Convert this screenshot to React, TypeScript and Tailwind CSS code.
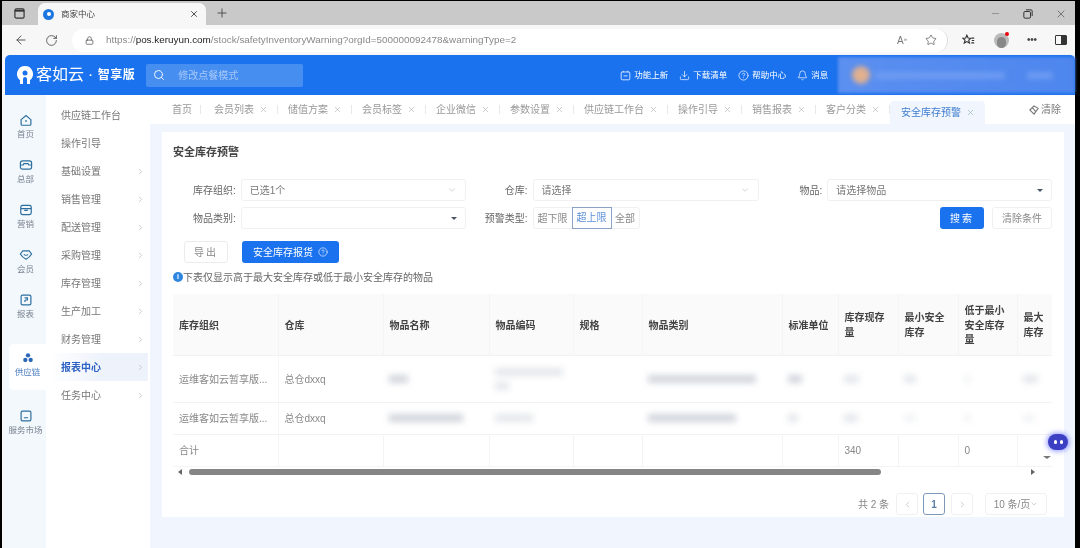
import {ArrowLeft, Bell, ChevronDown, ChevronLeft, ChevronRight, CircleHelp, Download, Lock, Minus, Plus, RotateCw, Search, Star, X} from "lucide-react";
import type {ReactNode} from "react";

const font = {fontFamily: '"Liberation Sans", "Noto Sans CJK SC", sans-serif'}

const railTop = [
    {label: "首页", d: "M3 9.5 10 3.5l7 6V16a1.5 1.5 0 0 1-1.5 1.5h-11A1.5 1.5 0 0 1 3 16ZM10 10v3"},
    {label: "总部", d: "M5 4h10a3 3 0 0 1 3 3v6a3 3 0 0 1-3 3H5a3 3 0 0 1-3-3V7a3 3 0 0 1 3-3ZM2 10h4l1-2h6l1 2h4"},
    {label: "营销", d: "M5 3.5h10A2.5 2.5 0 0 1 17.5 6v8a2.5 2.5 0 0 1-2.5 2.5H5A2.5 2.5 0 0 1 2.5 14V6A2.5 2.5 0 0 1 5 3.5ZM2.5 8h15M7.5 10.5h5"},
    {label: "会员", d: "M5.5 4h9L18 8.5c-2 3.5-5 6-8 7.5-3-1.5-6-4-8-7.5ZM7 9c1.5 1.5 4.5 1.5 6 0"},
    {label: "报表", d: "M5 3h10a2 2 0 0 1 2 2v10a2 2 0 0 1-2 2H5a2 2 0 0 1-2-2V5a2 2 0 0 1 2-2ZM8 7h4v3H8.5M8.5 10v3"},
]

const menus = [
    {label: "供应链工作台"},
    {label: "操作引导"},
    {label: "基础设置", more: true},
    {label: "销售管理", more: true},
    {label: "配送管理", more: true},
    {label: "采购管理", more: true},
    {label: "库存管理", more: true},
    {label: "生产加工", more: true},
    {label: "财务管理", more: true},
    {label: "报表中心", more: true, active: true},
    {label: "任务中心", more: true},
]

const tabs = ["会员列表", "储值方案", "会员标签", "企业微信", "参数设置", "供应链工作台", "操作引导", "销售报表", "客户分类"]

const columns = [105, 105, 106, 84, 69, 140, 56, 60, 60, 59, 35]
const heads = ["库存组织", "仓库", "物品名称", "物品编码", "规格", "物品类别", "标准单位", "库存现存量", "最小安全库存", "低于最小安全库存量", "最大库存"]

// masked values in the source, only a smudge is left
const Smudge = ({w, tone = "bg-gray-300"}: { w: number, tone?: string }) => (
    <div className={`h-[8px] blur-[3px] ${tone}`} style={{width: w}}/>
)

const rows = [
    [<Smudge key="a" w={19}/>, <div key="b" className="flex flex-col gap-[6px]"><Smudge w={68} tone="bg-gray-200"/><Smudge w={14} tone="bg-gray-200"/></div>, null, <Smudge key="c" w={108}/>, <Smudge key="d" w={14}/>, <Smudge key="e" w={15} tone="bg-gray-200"/>, <Smudge key="f" w={12} tone="bg-gray-200"/>, <Smudge key="g" w={7} tone="bg-gray-100"/>, <Smudge key="h" w={15} tone="bg-gray-200"/>],
    [<Smudge key="a" w={74}/>, <Smudge key="b" w={38} tone="bg-gray-200"/>, null, <Smudge key="c" w={88}/>, <Smudge key="d" w={10} tone="bg-gray-200"/>, <Smudge key="e" w={14} tone="bg-gray-200"/>, <Smudge key="f" w={12} tone="bg-gray-100"/>, <Smudge key="g" w={7} tone="bg-gray-100"/>, <Smudge key="h" w={12} tone="bg-gray-100"/>],
]

const Caret = ({className = ""}: { className?: string }) => (
    <span className={`w-0 h-0 border-x-[3px] border-x-transparent border-t-[3px] border-t-gray-600 ${className}`}/>
)

const Field = ({label, width, children}: { label: string, width: string, children: ReactNode }) => (
    <div className="flex items-center">
        <span className="text-[10px] text-[#666] whitespace-nowrap mr-[5px]">{label}:</span>
        <div className={`h-[22px] rounded-[3px] border border-[#f0f0f0] flex items-center justify-between pl-[8px] pr-[8px] text-[10px] text-[#777] ${width}`}>
            {children}
        </div>
    </div>
)

const Icon = ({d, className}: { d: string, className: string }) => (
    <svg viewBox="0 0 20 20" fill="none" stroke="currentColor" strokeWidth="1.7" className={className}>
        <path d={d}/>
    </svg>
)

function Chrome() {
    return (
        <>
            <div className="h-[24px] bg-[#c9c9c9] flex items-end pl-[12px] pr-[7px] shrink-0">
                <svg viewBox="0 0 12 12" className="w-[11px] h-[11px] mb-[6px] text-[#333]" fill="none" stroke="currentColor" strokeWidth="1.3">
                    <rect x="1" y="1" width="10" height="10" rx="1.5"/>
                    <path d="M1 3h10" strokeWidth="2"/>
                </svg>
                <div className="ml-[13px] w-[168px] h-[22px] bg-[#f7f7f7] rounded-t-[7px] flex items-center pl-[5px] pr-[7px]">
                    <span className="w-[11px] h-[11px] rounded-full bg-[#1c77e0] flex items-center justify-center">
                        <span className="w-[4px] h-[4px] rounded-full bg-white"/>
                    </span>
                    <span className="ml-[7px] text-[8.5px] text-[#444]">商家中心</span>
                    <X className="ml-auto w-[10px] h-[10px] text-[#333]" strokeWidth={2}/>
                </div>
                <Plus className="ml-[9px] mb-[5px] w-[14px] h-[14px] text-[#444]" strokeWidth={1.5}/>
                <Minus className="ml-auto mb-[6px] w-[11px] h-[11px] text-[#666]" strokeWidth={1.2}/>
                <svg viewBox="0 0 12 12" className="ml-[22px] mb-[6px] w-[10px] h-[10px] text-[#333]" fill="none" stroke="currentColor" strokeWidth="1.2">
                    <rect x="1" y="3" width="8" height="8" rx="1.5"/>
                    <path d="M3.5 1h6a1.5 1.5 0 0 1 1.5 1.5v6"/>
                </svg>
                <X className="ml-[22px] mr-[1px] mb-[5px] w-[12px] h-[12px] text-[#444]" strokeWidth={1.3}/>
            </div>
            <div className="h-[30px] bg-[#f7f7f7] flex items-center pl-[12px] pr-[7px] shrink-0">
                <ArrowLeft className="w-[14px] h-[14px] text-[#444]" strokeWidth={1.5}/>
                <RotateCw className="ml-[17px] w-[13px] h-[13px] text-[#444]" strokeWidth={1.5}/>
                <div className="ml-[14px] w-[876px] h-[23px] bg-white rounded-full border-r border-[#ddd] flex items-center pl-[13px] pr-[10px]">
                    <Lock className="w-[9px] h-[9px] text-[#555]" strokeWidth={2}/>
                    <span className="ml-[12px] text-[9.9px] text-[#888] whitespace-nowrap">
                        https://<span className="text-[#222]">pos.keruyun.com</span>/stock/safetyInventoryWarning?orgId=500000092478&amp;warningType=2
                    </span>
                    <span className="ml-auto text-[10px] text-[#777]">A<sup className="text-[6px]">»</sup></span>
                    <Star className="ml-[18px] w-[12px] h-[12px] text-[#444]" strokeWidth={1.3}/>
                </div>
                <svg viewBox="0 0 16 16" className="ml-[14px] w-[13px] h-[13px] text-[#333]" fill="none" stroke="currentColor" strokeWidth="1.4">
                    <path d="M6 1.5 7.5 5l3.5.3-2.7 2.3.9 3.6L6 9.3l-3.2 1.9.9-3.6L1 5.3 4.5 5ZM12 5h3M12 8h3M11.5 11H15"/>
                </svg>
                <span className="relative ml-[19px] w-[15px] h-[15px] rounded-full bg-[#bbb] flex items-end justify-center overflow-visible">
                    <span className="w-[9px] h-[11px] rounded-full bg-[#888]"/>
                    <span className="absolute right-0 top-[-1px] w-[4px] h-[4px] rounded-full bg-red-600"/>
                </span>
                <span className="ml-[18px] text-[10px] leading-none text-[#444] tracking-tight">•••</span>
                <span className="ml-[18px] w-[12px] h-[10px] border border-[#333] rounded-[1px] flex justify-end">
                    <span className="w-[5px] bg-[#333]"/>
                </span>
            </div>
        </>
    )
}

function Header() {
    const links = [
        {label: "功能上新", icon: <svg viewBox="0 0 14 14" fill="none" stroke="currentColor" strokeWidth="1" className="w-[11px] h-[11px]"><rect x="1.5" y="2.5" width="11" height="10" rx="1.5"/><path d="M4 1v2M10 1v2M4.5 7.5h5"/></svg>},
        {label: "下载清单", icon: <Download className="w-[11px] h-[11px]" strokeWidth={1.5}/>},
        {label: "帮助中心", icon: <CircleHelp className="w-[11px] h-[11px]" strokeWidth={1.5}/>},
        {label: "消息", icon: <Bell className="w-[11px] h-[11px]" strokeWidth={1.5}/>},
    ]
    return (
        <div className="h-[40px] bg-[#1a72ee] rounded-t-[5px] flex items-center pl-[12px] shrink-0 text-white">
            <svg viewBox="0 0 16 18" className="w-[16px] h-[18px]" fill="white">
                <path d="M8 0a8 8 0 0 1 5 14.2V18h-3v-5a2 2 0 0 0-4 0v5H3v-3.8A8 8 0 0 1 8 0Z"/>
                <circle cx="8" cy="7" r="2.5" fill="#1a72ee"/>
            </svg>
            <span className="ml-[3px] text-[16px] whitespace-nowrap">客如云</span>
            <span className="mx-[5px] text-[11px] font-bold">·</span>
            <span className="text-[12px] tracking-[0.5px] font-bold whitespace-nowrap">智享版</span>
            <div className="ml-[11px] w-[157px] h-[23px] rounded-[2px] bg-white/20 flex items-center pl-[7px]">
                <Search className="w-[12px] h-[12px]" strokeWidth={1.8}/>
                <span className="ml-[13px] text-[10px] text-white/50 blur-[0.4px]">修改点餐模式</span>
            </div>
            <div className="ml-[317px] flex items-center gap-[11px] w-[210px]">
                {links.map(link =>
                    <div key={link.label} className="flex items-center gap-[3px] whitespace-nowrap text-[8.5px]">
                        {link.icon}
                        <span>{link.label}</span>
                    </div>)}
            </div>
            <div className="ml-auto w-[237px] h-[36px] bg-linear-to-r from-[#5b8ff0] to-[#4d86ee] flex items-center pl-[14px] blur-[1.5px]">
                <span className="w-[18px] h-[18px] rounded-full bg-[#e0b08f] blur-[2px]"/>
                <span className="ml-[5px] w-[130px] h-[7px] bg-[#6d9bf2] blur-[2px]"/>
                <span className="ml-[22px] w-[26px] h-[7px] bg-[#6d9bf2] blur-[2px]"/>
            </div>
        </div>
    )
}

function Sidebar() {
    return (
        <>
            <div className="w-[41px] bg-[#f3f8fd] pt-[4px] shrink-0 flex flex-col">
                {railTop.map(item =>
                    <div key={item.label} className="h-[45px] flex flex-col items-center pt-[14px] text-[#7a8290]">
                        <Icon d={item.d} className="w-[14px] h-[14px] text-[#2c6f9f]"/>
                        <span className="text-[8.5px] mt-[1px]">{item.label}</span>
                    </div>)}
                <div className="mt-[20px] ml-[4px] h-[46px] bg-white rounded-l-[5px] flex flex-col items-center pt-[9px]">
                    <svg viewBox="0 0 12 12" className="w-[10px] h-[10px] text-[#2a67b8]" fill="currentColor">
                        <circle cx="6" cy="2.8" r="2.6"/><circle cx="2.8" cy="8.4" r="2.6"/><circle cx="9.2" cy="8.4" r="2.6"/>
                    </svg>
                    <span className="text-[8.5px] mt-[3px] text-[#4d7ec0] whitespace-nowrap">供应链</span>
                </div>
                <div className="mt-[6px] flex flex-col items-center pt-[13px] text-[#7a8290]">
                    <Icon d="M5 3h10a2 2 0 0 1 2 2v10a2 2 0 0 1-2 2H5a2 2 0 0 1-2-2V5a2 2 0 0 1 2-2ZM7 12.5h6" className="w-[14px] h-[14px] text-[#2c6f9f]"/>
                    <span className="text-[8.5px] mt-[1px] whitespace-nowrap">服务市场</span>
                </div>
            </div>
            <div className="w-[104px] bg-white pt-[6px] shrink-0">
                {menus.map(menu =>
                    <div key={menu.label}
                         className={`h-[28px] ml-[4px] mr-[2px] pl-[11px] pr-[3px] flex items-center justify-between text-[10px] ${menu.active ? "bg-linear-to-r from-white via-[#eef3fb] to-[#eef3fb] text-[#2d62c4] font-bold" : "text-[#777]"}`}>
                        <span className="whitespace-nowrap">{menu.label}</span>
                        {menu.more && <ChevronRight className="w-[9px] h-[9px] text-[#bbb]"/>}
                    </div>)}
            </div>
        </>
    )
}

function TabBar() {
    return (
        <div className="h-[29px] bg-white flex items-center pl-[22px] shrink-0 text-[10px] text-[#999]">
            <span className="whitespace-nowrap">首页</span>
            <span className="ml-[8px] mr-[13px] h-[9px] w-px bg-[#e8e8e8]"/>
            {tabs.map(tab =>
                <div key={tab} className="flex items-center whitespace-nowrap">
                    <span>{tab}</span>
                    <X className="ml-[5px] w-[9px] h-[9px] text-[#aaa]" strokeWidth={1.5}/>
                    <span className="ml-[9px] mr-[10px] h-[9px] w-px bg-[#e8e8e8]"/>
                </div>)}
            <div className="-ml-[10px] h-[23px] mt-[6px] w-[95px] pl-[11px] bg-[#f1f5fd] rounded-t-[4px] flex items-center text-[#3f7fd0] whitespace-nowrap">
                <span>安全库存预警</span>
                <X className="ml-[5px] w-[9px] h-[9px] text-[#8aa]" strokeWidth={1.5}/>
            </div>
            <div className="ml-auto mr-[14px] flex items-center gap-[2px] text-[#777]">
                <svg viewBox="0 0 12 12" className="w-[10px] h-[10px]" fill="none" stroke="currentColor" strokeWidth="1.3"><path d="M1 6l5-5 5 3-5 7ZM4 3l4 5"/></svg>
                <span>清除</span>
            </div>
        </div>
    )
}

function Filters() {
    return (
        <div className="flex flex-col">
            <div className="flex items-center h-[22px]">
                <div className="ml-[20px]"><Field label="库存组织" width="w-[225px]">已选1个<ChevronDown className="w-[10px] h-[10px] text-[#ccc]"/></Field></div>
                <div className="ml-[39px]"><Field label="仓库" width="w-[226px]">请选择<ChevronDown className="w-[10px] h-[10px] text-[#ccc]"/></Field></div>
                <div className="ml-[41px]"><Field label="物品" width="w-[225px]">请选择物品<Caret/></Field></div>
            </div>
            <div className="flex items-center h-[22px] mt-[6px]">
                <div className="ml-[20px]"><Field label="物品类别" width="w-[225px]"><span/><Caret/></Field></div>
                <div className="ml-[19px] flex items-center">
                    <span className="text-[10px] text-[#666] mr-[5px] whitespace-nowrap">预警类型:</span>
                    <div className="w-[107px] h-[22px] rounded-[3px] border border-[#f0f0f0] flex items-center text-[10px] text-[#888]">
                        <span className="w-[38px] text-center">超下限</span>
                        <span className="w-[40px] h-[22px] leading-[20px] text-center border border-[#8aa3c4] text-[#5a8fd8]">超上限</span>
                        <span className="w-[27px] text-center">全部</span>
                    </div>
                </div>
                <button className="ml-auto w-[44px] h-[22px] rounded-[3px] bg-[#1a72ee] text-white text-[10px] tracking-[2px]">搜索</button>
                <button className="ml-[8px] mr-[12px] w-[60px] h-[22px] rounded-[3px] border border-[#f0f0f0] text-[#888] text-[10px]">清除条件</button>
            </div>
            <div className="flex items-center h-[22px] mt-[12px] pl-[11px]">
                <button className="w-[44px] h-[22px] rounded-[3px] border border-[#ececec] text-[#888] text-[10px] tracking-[2px]">导出</button>
                <button className="ml-[14px] w-[97px] h-[22px] rounded-[3px] bg-[#1a72ee] text-white text-[10px] flex items-center justify-center gap-[5px]">
                    安全库存报货
                    <CircleHelp className="w-[10px] h-[10px]" strokeWidth={1.5}/>
                </button>
            </div>
            <div className="flex items-center mt-[7px] h-[14px] text-[10px] text-[#666]">
                <span className="w-[10px] h-[10px] rounded-full bg-[#2f86e0] text-white text-[7px] font-bold leading-[10px] text-center shrink-0">i</span>
                <span className="whitespace-nowrap">下表仅显示高于最大安全库存或低于最小安全库存的物品</span>
            </div>
        </div>
    )
}

function StockTable() {
    return (
        <div className="mt-[10px] mr-[12px] relative">
            <table className="table-fixed border-collapse w-[879px] text-[10px]">
                <colgroup>
                    {columns.map((w, i) => <col key={i} style={{width: w}}/>)}
                </colgroup>
                <thead>
                    <tr className="h-[61px] bg-[#fafafa] text-[#444] font-bold">
                        {heads.map((h, i) =>
                            <th key={h} className={`px-[6px] pt-[3px] pb-0 text-left align-middle font-bold leading-[14.5px] border-r border-[#f4f4f4] ${i === 10 ? "border-r-0" : ""}`}>
                                <div className={i === 9 ? "h-[43px] overflow-hidden" : ""}>{h}</div>
                            </th>)}
                    </tr>
                </thead>
                <tbody className="text-[#888]">
                    {rows.map((cells, r) =>
                        <tr key={r} className={`${r === 0 ? "h-[47px]" : "h-[32px]"} border-t border-[#f2f2f2]`}>
                            <td className={`px-[6px] border-r border-[#f6f6f6] whitespace-nowrap ${r === 0 ? "pt-[2px]" : ""}`}>运维客如云暂享版...</td>
                            <td className={`px-[6px] whitespace-nowrap ${r === 0 ? "pt-[2px]" : ""}`}>总仓dxxq</td>
                            {cells.map((cell, i) => <td key={i} className="px-[6px]">{cell}</td>)}
                        </tr>)}
                    <tr className="h-[32px] border-t border-[#f2f2f2]">
                        <td className="px-[6px] border-r border-[#f4f4f4]">合计</td>
                        {columns.slice(1).map((_, i) =>
                            <td key={i} className="px-[6px] border-r border-[#f4f4f4] last:border-r-0 text-[#888]">
                                {i === 6 ? "340" : i === 8 ? "0" : ""}
                            </td>)}
                    </tr>
                </tbody>
            </table>
            <div className="h-[10px] flex items-center pl-[5px] border-t border-[#f4f4f4] w-[879px]">
                <span className="w-0 h-0 border-y-[3px] border-y-transparent border-r-[4px] border-r-[#666]"/>
                <div className="ml-[7px] w-[692px] h-[6px] rounded-full bg-[#858585]"/>
                <span className="ml-[150px] w-0 h-0 border-y-[3px] border-y-transparent border-l-[4px] border-l-[#666]"/>
            </div>
            <span className="absolute right-[1px] top-[162px] w-0 h-0 border-x-[4px] border-x-transparent border-t-[3px] border-t-[#777]"/>
            <span className="absolute -right-[16px] top-[140px] w-[20px] h-[16px] rounded-full bg-[#3c3fc4] shadow-[0_0_4px_2px_rgba(90,100,255,0.5)] flex items-center justify-center gap-[3px]">
                <span className="w-[3px] h-[4px] rounded-full bg-white"/>
                <span className="w-[3px] h-[4px] rounded-full bg-white"/>
            </span>
        </div>
    )
}

function Pagination() {
    return (
        <div className="mt-[17px] mr-[17px] flex items-center justify-end text-[10px] text-[#888]">
            <span className="whitespace-nowrap">共 2 条</span>
            <span className="ml-[7px] w-[22px] h-[22px] rounded-[3px] border border-[#f0f0f0] flex items-center justify-center"><ChevronLeft className="w-[9px] h-[9px] text-[#bbb]"/></span>
            <span className="ml-[5px] w-[22px] h-[22px] rounded-[3px] border border-[#7f9ab8] flex items-center justify-center text-[#5a7ea8] font-bold">1</span>
            <span className="ml-[6px] w-[22px] h-[22px] rounded-[3px] border border-[#f0f0f0] flex items-center justify-center"><ChevronRight className="w-[9px] h-[9px] text-[#bbb]"/></span>
            <span className="ml-[12px] w-[62px] h-[22px] rounded-[3px] border border-[#f0f0f0] flex items-center justify-center whitespace-nowrap">10 条/页<ChevronDown className="w-[8px] h-[8px] text-[#bbb]"/></span>
        </div>
    )
}

export default function App() {
    return (
        <div className="w-[1080px] h-[548px] overflow-hidden bg-black pt-px pl-[2px] pr-[5px]" style={font}>
            <div className="h-full flex flex-col bg-[#f7f7f7] blur-[0.3px]">
                <Chrome/>
                <div className="flex-1 min-h-0 pl-[3px] flex flex-col">
                    <Header/>
                    <div className="flex-1 min-h-0 flex bg-[#f1f5fd]">
                        <Sidebar/>
                        <main className="flex-1 min-w-0 flex flex-col">
                            <TabBar/>
                            <div className="mt-[8px] ml-[12px] mr-[11px] h-[385px] bg-white pl-[11px] pt-[12px]">
                                <h1 className="text-[11px] font-bold text-[#444] h-[16px] leading-[16px]">安全库存预警</h1>
                                <div className="mt-[19px]"><Filters/></div>
                                <StockTable/>
                                <Pagination/>
                            </div>
                        </main>
                    </div>
                </div>
            </div>
        </div>
    )
}
